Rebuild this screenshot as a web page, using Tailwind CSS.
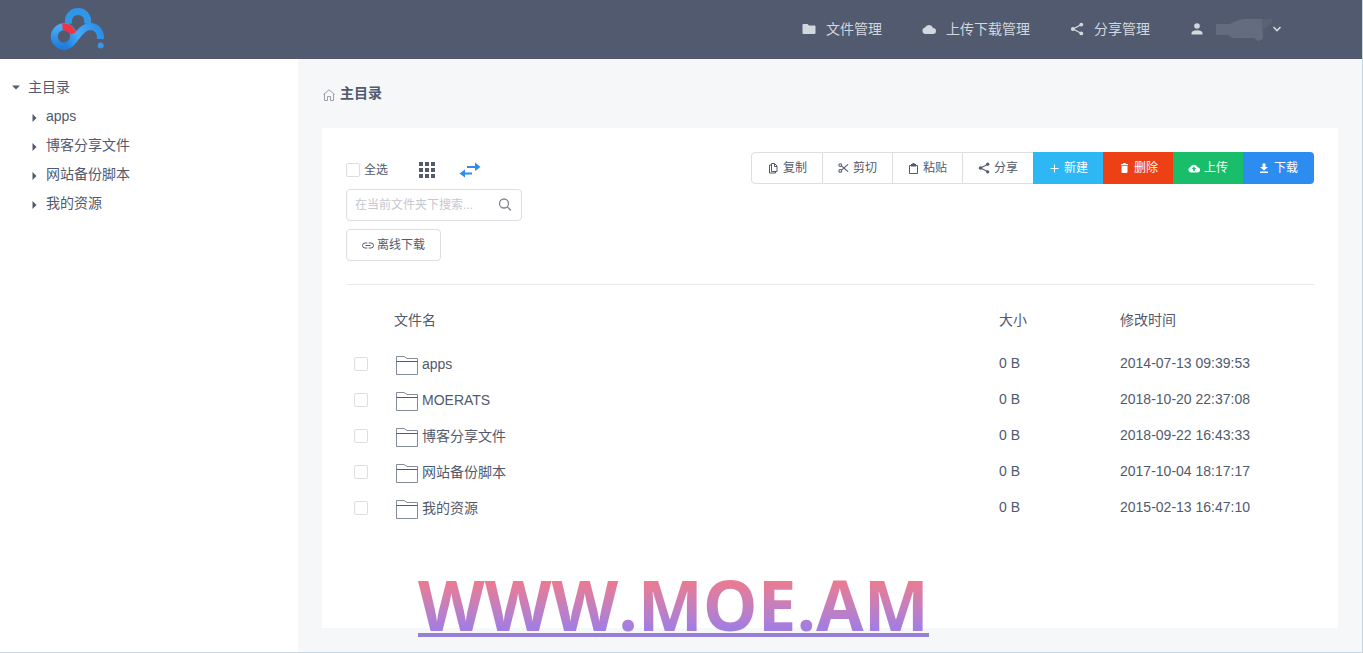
<!DOCTYPE html>
<html lang="zh-CN">
<head>
<meta charset="utf-8">
<title>文件管理</title>
<script src="https://cdn.jsdelivr.net/npm/@tailwindcss/browser@4"></script>
</head>
<body class="bg-[#f5f7f9] font-['Liberation_Sans','Noto_Sans_CJK_SC',sans-serif] text-sm text-[#515a6e]">
<svg class="hidden">
  <defs>
    <symbol id="share" viewBox="0 0 14 14"><path d="M11.500 2.500 3 7l8.500 4.500" fill="none" stroke="currentColor" stroke-width="1.300"/><circle cx="11.300" cy="2.600" r="1.900"/><circle cx="2.900" cy="7" r="2"/><circle cx="11.300" cy="11.400" r="1.900"/></symbol>
    <symbol id="folder" viewBox="0 0 22 19"><path d="M.5 18.500V.5h7.500l3 2h10.500v16z" fill="none" stroke="#858b99"/><path d="M.5 5.500h21" stroke="#515a6e"/></symbol>
    <symbol id="caret" viewBox="0 0 5 8"><path d="M.5 0 4.500 4 .5 8z"/></symbol>
  </defs>
</svg>
<div class="flex min-h-screen flex-col border-r border-b border-[#c9d6df]">
  <header class="flex h-[59px] items-center justify-between bg-[#515a6e] pr-20 pb-0.5 pl-12 text-[#d3d7de]">
    <a href="#" aria-label="网盘首页">
      <svg class="h-[44px] w-[60px]" viewBox="0 0 60 44" fill="none" stroke-width="7">
        <defs>
          <linearGradient id="lg" x1="0" y1="0" x2="0" y2="1"><stop offset="0" stop-color="#4aabf4"/><stop offset="1" stop-color="#1f7fdc"/></linearGradient>
          <linearGradient id="tail" gradientUnits="userSpaceOnUse" x1="18" y1="38" x2="52" y2="22"><stop offset="0" stop-color="#1f7fdc"/><stop offset=".4" stop-color="#46a8f5"/><stop offset="1" stop-color="#2b8ee8"/></linearGradient>
        </defs>
        <path d="M20.500 17C19.500 8.500 24.500 4.500 30 4.500S41 9 39.500 17" stroke="#3196e8"/>
        <circle cx="16" cy="29.500" r="9.700" stroke="url(#lg)"/>
        <path d="M14.500 20A9.700 9.700 0 0 1 25 26.500" stroke="#ef3340"/>
        <path d="M16 39.200C27 39 30 20 42 19.500C49 19.500 53 25 52.500 32" stroke="url(#tail)"/>
        <circle cx="52.700" cy="38.500" r="3" fill="#3497eb"/>
      </svg>
    </a>
    <nav class="flex items-center gap-10">
      <a href="#" class="flex items-center gap-2.5"><svg class="h-3.5 w-3.5" viewBox="0 0 14 14" fill="currentColor"><path d="M1.500 2h4L7 3.500h5.500q1 0 1 1V11q0 1-1 1h-11q-1 0-1-1V3q0-1 1-1z"/></svg>文件管理</a>
      <a href="#" class="flex items-center gap-2.5"><svg class="h-3.5 w-3.5" viewBox="0 0 14 14" fill="currentColor"><path d="M3.500 12A3.300 3.300 0 0 1 3 5.500 4.300 4.300 0 0 1 11 6a3 3 0 0 1 0 6z"/></svg>上传下载管理</a>
      <a href="#" class="flex items-center gap-2.5"><svg class="h-3.5 w-3.5" fill="currentColor"><use href="#share"/></svg>分享管理</a>
      <button type="button" aria-label="用户菜单" class="flex items-center gap-2.5">
        <svg class="h-3.5 w-3.5" viewBox="0 0 14 14" fill="currentColor"><circle cx="7" cy="4" r="2.800"/><path d="M1.500 12.500V11Q2 8.200 7 8.200t5.500 2.800v1.500z"/></svg>
        <span class="flex items-center">
          <svg class="h-6 w-[58px]" viewBox="0 0 58 24"><path d="M48 2h10q2 3-4 7l-5 4z" fill="#596276"/><path d="M2 7h14Q24 2 34 2h14l1 19q-2 3-5 3l-4-3H20q-4 0-5-3H2z" fill="#646c80"/></svg>
          <svg class="h-2 w-2.5" viewBox="0 0 10 8" fill="none" stroke="currentColor" stroke-width="1.600"><path d="m1.500 2 3.500 3.500L8.500 2"/></svg>
        </span>
      </button>
    </nav>
  </header>
  <div class="flex flex-1">
    <aside class="w-[298px] shrink-0 bg-white px-3 pt-[13px]">
      <ul>
        <li>
          <a href="#" class="flex h-[29px] items-center gap-2"><svg class="h-2 w-2" viewBox="0 0 8 8" fill="currentColor"><path d="M0 2.500h8l-4 4z"/></svg>主目录</a>
          <ul class="pl-5">
            <li><a href="#" class="flex h-[29px] items-center gap-[9px]"><svg class="mt-1 h-2 w-[5px]" fill="currentColor"><use href="#caret"/></svg>apps</a></li>
            <li><a href="#" class="flex h-[29px] items-center gap-[9px]"><svg class="mt-1 h-2 w-[5px]" fill="currentColor"><use href="#caret"/></svg>博客分享文件</a></li>
            <li><a href="#" class="flex h-[29px] items-center gap-[9px]"><svg class="mt-1 h-2 w-[5px]" fill="currentColor"><use href="#caret"/></svg>网站备份脚本</a></li>
            <li><a href="#" class="flex h-[29px] items-center gap-[9px]"><svg class="mt-1 h-2 w-[5px]" fill="currentColor"><use href="#caret"/></svg>我的资源</a></li>
          </ul>
        </li>
      </ul>
    </aside>
    <main class="relative min-w-0 flex-1 px-6 pt-6 pb-6">
      <a href="#" class="flex h-5 items-center gap-1 font-bold"><svg class="mt-1 h-3 w-3.5" viewBox="0 0 14 12" fill="none" stroke="#999ea8"><path d="M1.500 5.500 7 .8l5.500 4.700M2.500 4.800v6.700h3v-4h3v4h3V4.800"/></svg>主目录</a>
      <section class="mt-[25px] min-h-[500px] bg-white p-6">
        <div class="flex items-start justify-between border-b border-[#e8eaec] pb-[23px]">
          <div class="flex flex-col items-start gap-2 text-xs">
            <div class="flex h-[29px] items-center pt-1.5">
              <label class="flex items-center gap-1"><input type="checkbox" class="h-3.5 w-3.5 appearance-none rounded-xs border border-[#dcdee2] bg-white">全选</label>
              <button type="button" aria-label="网格视图" class="ml-[31px]"><svg class="h-4 w-4" viewBox="0 0 16 16" fill="#515a6e"><path d="M0 0h4v4H0zM6 0h4v4H6zM12 0h4v4h-4zM0 6h4v4H0zM6 6h4v4H6zM12 6h4v4h-4zM0 12h4v4H0zM6 12h4v4H6zM12 12h4v4h-4z"/></svg></button>
              <button type="button" aria-label="切换" class="ml-6"><svg class="h-4 w-[22px]" viewBox="0 0 22 16" fill="#2d8cf0"><path d="M8 4h8V.5l5.500 4.500L16 9V6H8zM13 10.500H6V7.500L.5 11.500 6 15.500v-3h7z"/></svg></button>
            </div>
            <label class="flex h-8 w-44 items-center rounded border border-[#dcdee2] px-2">
              <input type="text" aria-label="搜索" placeholder="在当前文件夹下搜索..." class="min-w-0 flex-1 outline-none placeholder:text-[#c5c8ce]">
              <svg class="h-4 w-4" viewBox="0 0 16 16" fill="none" stroke="#808695" stroke-width="1.300"><circle cx="7" cy="6.500" r="4.500"/><path d="m10.500 10 3.500 3.500"/></svg>
            </label>
            <button type="button" class="flex h-8 items-center gap-[3px] rounded border border-[#dcdee2] px-[15px]"><svg class="h-3 w-3" viewBox="0 0 12 12" fill="none" stroke="currentColor"><path d="M5.300 4H3a2 2 0 0 0 0 5h2.300M6.700 4H9a2 2 0 0 1 0 5H6.700M3.500 6.500h5"/></svg>离线下载</button>
          </div>
          <div class="flex text-xs">
            <button type="button" class="flex h-8 items-center gap-1 rounded-l border border-[#dcdee2] px-[15px]"><svg class="h-3 w-3" viewBox="0 0 12 12" fill="none" stroke="currentColor"><path d="M4.500 1.500h3l2.500 2.500v5.500h-5.500zM7.500 1.500v3H10M4.500 3h-2v8h6V9.500"/></svg>复制</button>
            <button type="button" class="flex h-8 items-center gap-1 border-y border-r border-[#dcdee2] px-[15px]"><svg class="h-3 w-[11px]" viewBox="0 0 12 12" fill="none" stroke="currentColor" stroke-width="1.200"><circle cx="2.500" cy="2.800" r="1.500"/><circle cx="2.500" cy="9.200" r="1.500"/><path d="m3.800 3.600 7.200 6.400M3.800 8.400 11 2"/></svg>剪切</button>
            <button type="button" class="flex h-8 items-center gap-1 border-y border-r border-[#dcdee2] px-[15px]"><svg class="h-3 w-[11px]" viewBox="0 0 11 12" fill="none" stroke="currentColor"><path d="M1.500 3.500h8v8h-8z"/><path d="M3 2h1.500V1h2v1H8v2.500H3z" fill="currentColor" stroke="none"/></svg>粘贴</button>
            <button type="button" class="flex h-8 items-center gap-1 border-y border-[#dcdee2] px-[15px]"><svg class="h-3 w-3" fill="currentColor"><use href="#share"/></svg>分享</button>
            <button type="button" class="flex h-8 items-center gap-1 bg-[#2db7f5] pr-[15px] pl-4 text-white"><svg class="h-3 w-[11px]" viewBox="0 0 11 12" stroke="currentColor"><path d="M5.500 2.500v8M1.500 6.500h8"/></svg>新建</button>
            <button type="button" class="flex h-8 items-center gap-1 bg-[#ed4014] pr-[15px] pl-4 text-white"><svg class="h-3 w-[11px]" viewBox="0 0 11 12" fill="currentColor"><path d="M2 2h2l.5-1h2L7 2h2v1.200H2zM2.500 4h6v6q0 1-1 1h-4q-1 0-1-1z"/></svg>删除</button>
            <button type="button" class="flex h-8 items-center gap-1 bg-[#19be6b] px-[15px] text-white"><svg class="h-3 w-3" viewBox="0 0 12 12" fill="currentColor" fill-rule="evenodd"><path d="M3 10.500A2.800 2.800 0 0 1 2.500 5a3.700 3.700 0 0 1 7 .3 2.600 2.600 0 0 1 0 5.200zM5.200 9h1.600V7h1.500L6 4.700 3.700 7h1.500z"/></svg>上传</button>
            <button type="button" class="flex h-8 items-center gap-1 rounded-r bg-[#2d8cf0] pr-4 pl-[15px] text-white"><svg class="h-3 w-3" viewBox="0 0 12 12" fill="currentColor"><path d="M4.500 1.500h3V5H10L6 8.500 2 5h2.500zM2 9.500h8V11H2z"/></svg>下载</button>
          </div>
        </div>
        <table class="mt-[17px] w-full table-fixed text-left">
          <thead>
            <tr class="h-9"><th class="w-12"></th><th class="font-normal">文件名</th><th class="w-[121px] font-normal">大小</th><th class="w-[194px] font-normal">修改时间</th></tr>
          </thead>
          <tbody>
            <tr class="h-2"></tr>
            <tr class="h-9"><td class="pl-2"><input type="checkbox" aria-label="选择 apps" class="block h-3.5 w-3.5 appearance-none rounded-xs border border-[#dcdee2] bg-white"></td><td><a href="#" class="flex items-center gap-1"><svg class="mt-0.5 ml-0.5 h-[19px] w-[22px]"><use href="#folder"/></svg>apps</a></td><td class="pb-0.5">0 B</td><td class="pb-0.5">2014-07-13 09:39:53</td></tr>
            <tr class="h-9"><td class="pl-2"><input type="checkbox" aria-label="选择 MOERATS" class="block h-3.5 w-3.5 appearance-none rounded-xs border border-[#dcdee2] bg-white"></td><td><a href="#" class="flex items-center gap-1"><svg class="mt-0.5 ml-0.5 h-[19px] w-[22px]"><use href="#folder"/></svg>MOERATS</a></td><td class="pb-0.5">0 B</td><td class="pb-0.5">2018-10-20 22:37:08</td></tr>
            <tr class="h-9"><td class="pl-2"><input type="checkbox" aria-label="选择 博客分享文件" class="block h-3.5 w-3.5 appearance-none rounded-xs border border-[#dcdee2] bg-white"></td><td><a href="#" class="flex items-center gap-1"><svg class="mt-0.5 ml-0.5 h-[19px] w-[22px]"><use href="#folder"/></svg>博客分享文件</a></td><td class="pb-0.5">0 B</td><td class="pb-0.5">2018-09-22 16:43:33</td></tr>
            <tr class="h-9"><td class="pl-2"><input type="checkbox" aria-label="选择 网站备份脚本" class="block h-3.5 w-3.5 appearance-none rounded-xs border border-[#dcdee2] bg-white"></td><td><a href="#" class="flex items-center gap-1"><svg class="mt-0.5 ml-0.5 h-[19px] w-[22px]"><use href="#folder"/></svg>网站备份脚本</a></td><td class="pb-0.5">0 B</td><td class="pb-0.5">2017-10-04 18:17:17</td></tr>
            <tr class="h-9"><td class="pl-2"><input type="checkbox" aria-label="选择 我的资源" class="block h-3.5 w-3.5 appearance-none rounded-xs border border-[#dcdee2] bg-white"></td><td><a href="#" class="flex items-center gap-1"><svg class="mt-0.5 ml-0.5 h-[19px] w-[22px]"><use href="#folder"/></svg>我的资源</a></td><td class="pb-0.5">0 B</td><td class="pb-0.5">2015-02-13 16:47:10</td></tr>
          </tbody>
        </table>
      </section>
      <a href="#" class="absolute bottom-[15px] left-[120px] border-b-4 border-[#977fd6]"><span class="block bg-linear-to-b from-[#e87b93] from-15% to-[#a47de0] to-90% bg-clip-text font-['Open_Sans',sans-serif] text-[69px] leading-[58px] font-bold text-transparent">WWW.MOE.AM</span></a>
    </main>
  </div>
</div>
</body>
</html>
